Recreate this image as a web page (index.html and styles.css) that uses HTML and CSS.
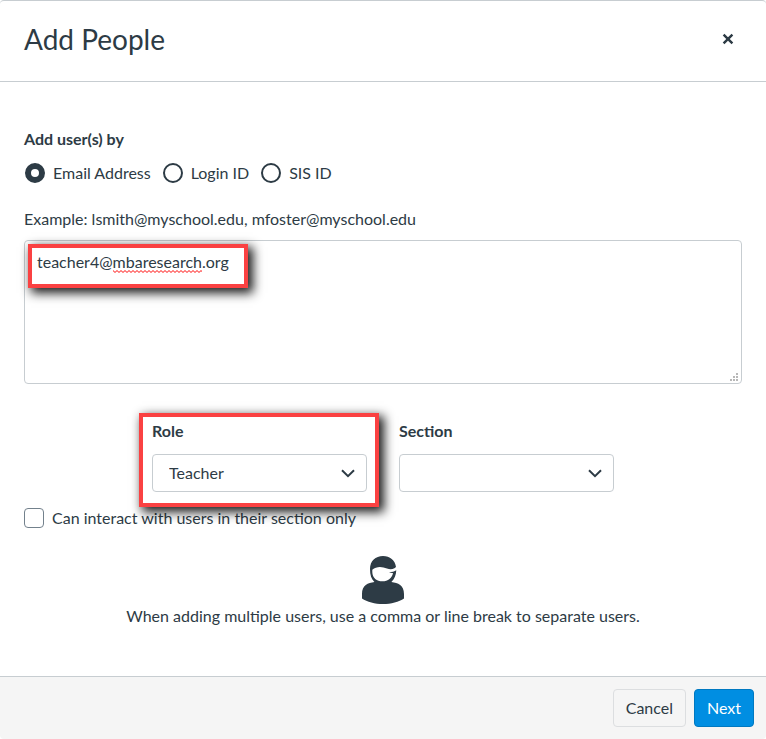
FILE: index.html
```
<!DOCTYPE html>
<html lang="en">
<head>
<meta charset="UTF-8">
<meta name="viewport" content="width=device-width, initial-scale=1.0">
<title>Add People</title>
<link rel="stylesheet" href="styles.css">
</head>
<body>
<form class="modal">
<header class="modal-header">
    <h1>Add People</h1>
    <button type="button" class="close-btn" aria-label="Close">
        <svg width="12" height="12" viewBox="0 0 12 12"><path d="M1.6 1.6 L10.4 10.4 M10.4 1.6 L1.6 10.4" fill="none" stroke="#2d3b45" stroke-width="2.4"/></svg>
    </button>
</header>
<main class="modal-body">
    <fieldset class="search-type">
        <legend>Add user(s) by</legend>
        <div class="radios">
            <label><input type="radio" name="searchType" value="email" checked>Email Address</label>
            <label><input type="radio" name="searchType" value="login">Login ID</label>
            <label><input type="radio" name="searchType" value="sis">SIS ID</label>
        </div>
    </fieldset>
    <label class="example" for="userList">Example: lsmith@myschool.edu, mfoster@myschool.edu</label>
    <div class="user-list">
        <textarea id="userList" spellcheck="false">teacher4@mbaresearch.org</textarea>
        <svg class="squiggle" width="89" height="3">
            <defs><pattern id="wave" width="4" height="3" patternUnits="userSpaceOnUse"><path d="M-1 1.5 L0 0.5 L2 2.5 L4 0.5 L5 1.5" fill="none" stroke="#f00" stroke-width="1"/></pattern></defs>
            <rect width="89" height="3" fill="url(#wave)"/>
        </svg>
        <svg class="grip" width="8" height="8" fill="#b8b8b8"><path d="M6 0h2v2h-2zM3 3h2v2h-2zM6 3h2v2h-2zM0 6h2v2h-2zM3 6h2v2h-2zM6 6h2v2h-2z"/></svg>
        <div class="highlight highlight-email"></div>
    </div>
    <div class="selects">
        <div class="field">
            <label for="role">Role</label>
            <select id="role"><option>Teacher</option></select>
            <div class="highlight highlight-role"></div>
        </div>
        <div class="field">
            <label for="section">Section</label>
            <select id="section"><option></option></select>
        </div>
    </div>
    <label class="limit"><input type="checkbox" id="limit">Can interact with users in their section only</label>
    <div class="info">
        <svg width="44" height="48" viewBox="0 0 44 48" fill="#2d3b45">
            <path fill-rule="evenodd" d="M22 0C29 0 34 4 35 11L33.4 12.3C30 14.2 26 12.8 22.5 11.6C19 10.6 14.5 11 11.3 13.8V16C11.3 22 15.8 25.3 21.5 25.3C27 25.3 31.3 21.5 32 16.9C30.5 17 29.3 16.8 28 16.2C31 16 33.5 15.4 35.3 14.2C35 19 33.6 23 30.4 26C37 27 43 29 43 38V42.5C38 46 30 48 22 48C14 48 6 46 1 42.5V38C1 29 7 27 13.4 26C10.4 23 9 19 9 13C9 5 14.5 0 22 0Z"/>
        </svg>
        <p>When adding multiple users, use a comma or line break to separate users.</p>
    </div>
</main>
<footer class="modal-footer">
    <button type="button" class="btn">Cancel</button>
    <button type="button" class="btn btn-primary">Next</button>
</footer>
</form>
</body>
</html>
```
FILE: styles.css
```
* {
box-sizing: border-box;
}
body {
margin: 0;
background-color: #fff;
color: #2d3b45;
font-family: Lato, "Liberation Sans", sans-serif;
font-size: 16px;
line-height: 24px;
}
input, select, textarea, button {
margin: 0;
color: inherit;
font: inherit;
}
.modal {
display: flex;
flex-direction: column;
min-height: 100vh;
border-top: 1px solid #c7cdd1;
border-radius: 4px;
overflow: hidden;
}
.modal-header {
display: flex;
align-items: center;
justify-content: space-between;
padding: 18px 24px 22px;
border-bottom: 1px solid #c7cdd1;
}
h1 {
margin: 0;
font-size: 28px;
font-weight: 400;
line-height: 40px;
}
.close-btn {
display: flex;
padding: 8px;
border: none;
background: none;
cursor: pointer;
}
.modal-body {
flex: 1;
display: flex;
flex-direction: column;
padding: 45px 24px;
}
.search-type {
margin: 0;
padding: 0;
border: none;
}
legend {
padding: 0;
font-weight: 700;
}
.radios {
display: flex;
gap: 11px;
margin-top: 10px;
}
.radios label, .limit {
display: flex;
align-items: center;
gap: 8px;
}
.radios input {
appearance: none;
width: 20px;
height: 20px;
margin-left: 1px;
border: 2px solid #2d3b45;
border-radius: 50%;
background-color: #fff;
}
.radios input:checked {
border-width: 6px;
}
.example {
margin-top: 22px;
}
.user-list {
position: relative;
margin-top: 9px;
}
textarea {
display: block;
width: 100%;
height: 144px;
padding: 9px 12px;
border: 1px solid #c7cdd1;
border-radius: 4px;
outline: none;
resize: none;
}
.squiggle {
position: absolute;
top: 30px;
left: 89px;
}
.grip {
position: absolute;
right: 4px;
bottom: 3px;
}
/* red callout frames */
.highlight {
position: absolute;
border: 4px solid #fa4142;
box-shadow: 4px 4px 10px 1px rgba(0, 0, 0, 0.9);
pointer-events: none;
}
.highlight-email {
top: 4px;
left: 4px;
width: 220px;
height: 44px;
}
.highlight-role {
top: -6px;
right: -12px;
bottom: -15px;
left: -13px;
}
.selects {
display: flex;
justify-content: center;
gap: 32px;
margin-top: 35px;
}
.field {
position: relative;
display: flex;
flex-direction: column;
gap: 11px;
width: 215px;
}
.field label {
font-weight: 700;
}
select {
appearance: none;
height: 38px;
padding: 0 16px;
border: 1px solid #c7cdd1;
border-radius: 4px;
background: #fff url("data:image/svg+xml,%3Csvg xmlns='http://www.w3.org/2000/svg' width='14' height='9'%3E%3Cpath d='M1 1.2 L7 7.2 L13 1.2' fill='none' stroke='%232d3b45' stroke-width='2'/%3E%3C/svg%3E") no-repeat right 11px center;
}
.limit {
margin-top: 14px;
}
.limit input {
appearance: none;
width: 20px;
height: 20px;
border: 1px solid #73818c;
border-radius: 4px;
background-color: #fff;
}
.info {
display: flex;
flex-direction: column;
align-items: center;
margin-top: 26px;
text-align: center;
}
.info p {
margin: 0;
}
.modal-footer {
display: flex;
justify-content: flex-end;
gap: 8px;
padding: 12px;
border-top: 1px solid #c7cdd1;
background-color: #f5f5f5;
}
.btn {
height: 38px;
padding: 0 12px;
border: 1px solid #dcdee0;
border-radius: 4px;
background-color: #f5f5f5;
cursor: pointer;
}
.btn-primary {
border-color: #0079c1;
background-color: #008ee2;
color: #fff;
}
```
